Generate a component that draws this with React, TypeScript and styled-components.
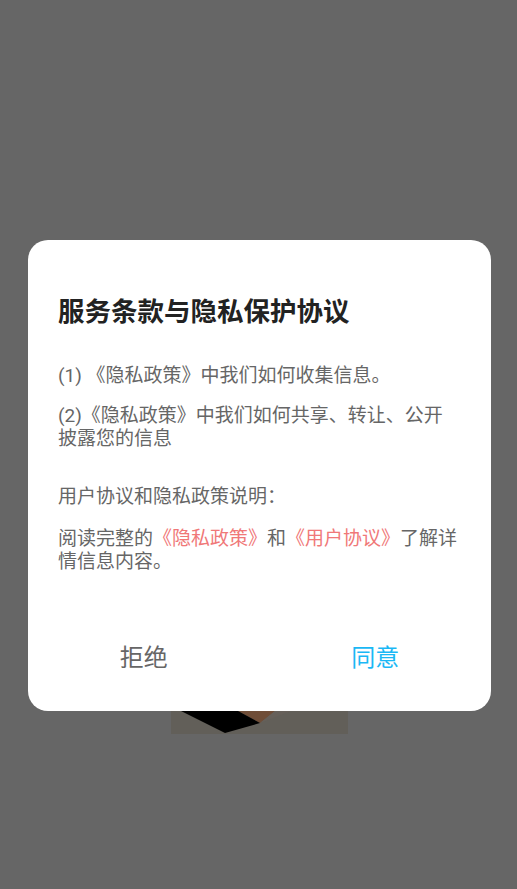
import { createGlobalStyle, styled } from "styled-components";

const GlobalStyle = createGlobalStyle`
  html, body {
    margin: 0;
    padding: 0;
    background: #666666;
  }
  * {
    box-sizing: border-box;
  }
`;

const Screen = styled.div`
  width: 517px;
  height: 889px;
  background: #666666;
  padding-top: 534px;
  overflow: hidden;
  font-family: Roboto, "Noto Sans CJK SC", sans-serif;
`;

const Splash = styled.svg`
  display: block;
  margin: 0 0 0 171px;
`;

const Backdrop = styled.div`
  position: fixed;
  inset: 0;
  display: flex;
  justify-content: flex-start;
  align-items: flex-start;
  padding: 240px 0 0 28px;
`;

const Dialog = styled.div`
  width: 463px;
  height: 471px;
  background: #ffffff;
  border-radius: 20px;
  padding: 54px 31px 0 30px;
  display: flex;
  flex-direction: column;
`;

const Title = styled.h1`
  margin: 0 0 34px;
  font-size: 26.5px;
  line-height: 36px;
  font-weight: 700;
  color: #222222;
`;

const Para = styled.p<{ $gap?: number }>`
  margin: 0 0 ${(p) => p.$gap ?? 0}px;
  font-size: 19px;
  line-height: 23px;
  color: #666666;
`;

const Link = styled.span`
  color: #f07878;
`;

const Actions = styled.div`
  margin: auto -31px 26px -30px;
  display: flex;
  height: 60px;
`;

const Action = styled.button<{ $primary?: boolean }>`
  flex: 1;
  border: none;
  background: transparent;
  font-family: Roboto, "Noto Sans CJK SC", sans-serif;
  font-size: 24px;
  color: ${(p) => (p.$primary ? "#1ab8f5" : "#666666")};
  cursor: pointer;
  padding: 0;
`;

const App = () => {
  return (
    <Screen>
      <GlobalStyle />
      <Splash width="177" height="200" viewBox="0 0 177 200">
        <rect width="177" height="200" fill="#625f59" />
        <polygon points="67,177 104,177 89,189" fill="#6f4d37" />
        <polygon points="89,189 104,177 120,177" fill="#66605a" />
        <polygon points="10,177 67,177 89,189 54,199" fill="#000000" />
      </Splash>
      <Backdrop>
        <Dialog>
          <Title>服务条款与隐私保护协议</Title>
          <Para $gap={17}>(1) 《隐私政策》中我们如何收集信息。</Para>
          <Para $gap={35}>(2)《隐私政策》中我们如何共享、转让、公开披露您的信息</Para>
          <Para $gap={19}>用户协议和隐私政策说明：</Para>
          <Para>
            阅读完整的<Link>《隐私政策》</Link>和<Link>《用户协议》</Link>了解详情信息内容。
          </Para>
          <Actions>
            <Action>拒绝</Action>
            <Action $primary>同意</Action>
          </Actions>
        </Dialog>
      </Backdrop>
    </Screen>
  );
};

export default App;
